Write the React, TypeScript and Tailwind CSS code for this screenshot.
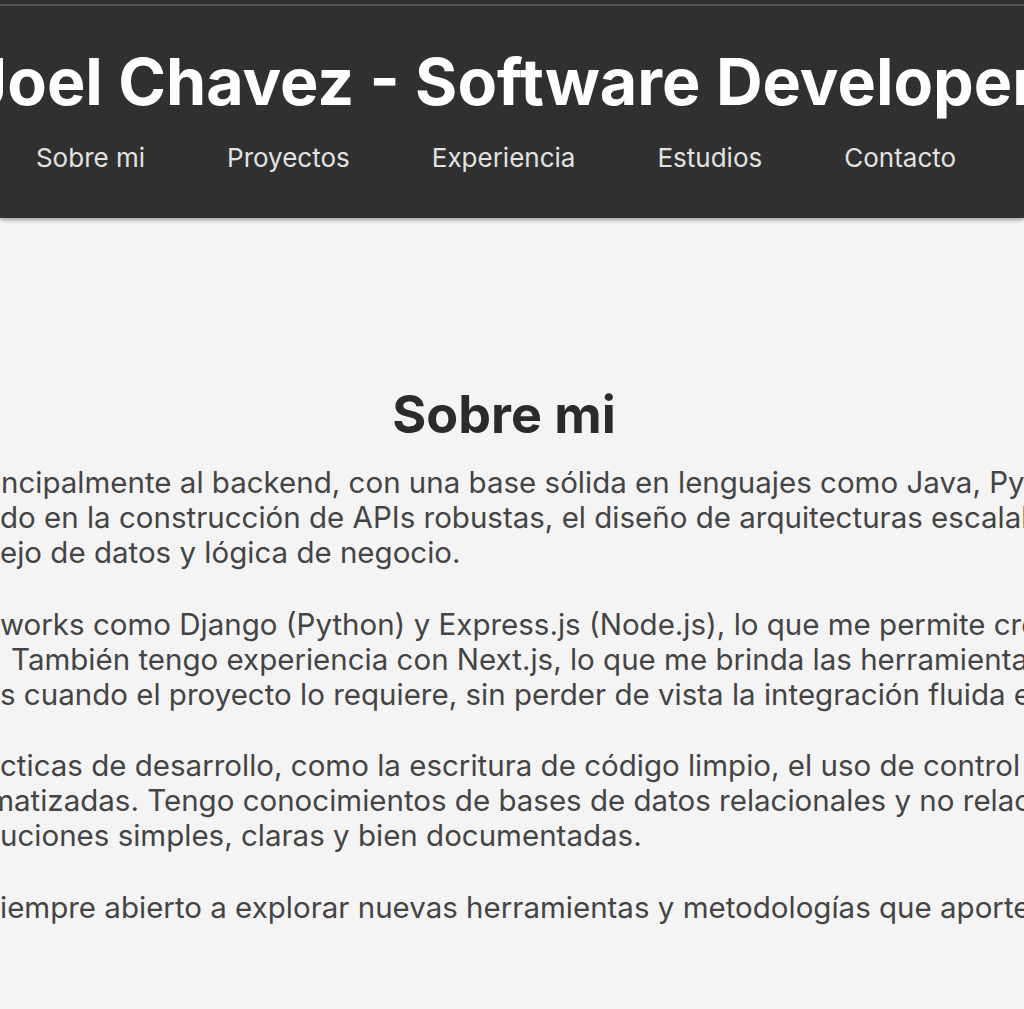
const enlaces = ["Sobre mi", "Proyectos", "Experiencia", "Estudios", "Contacto"];

// cada linea: [texto que queda a la izquierda (fuera de vista), texto visible, sangria]
const parrafos: [string, string, string][][] = [
  [
    ["Soy desarrollador de software orientado pri", "ncipalmente al backend, con una base sólida en lenguajes como Java, Python y JavaScript.", "pl-[1px]"],
    ["Me he enfoca", "do en la construcción de APIs robustas, el diseño de arquitecturas escalables y el", "pl-0"],
    ["man", "ejo de datos y lógica de negocio.", "pl-0"],
  ],
  [
    ["He trabajado con frame", "works como Django (Python) y Express.js (Node.js), lo que me permite crear servicios", "pl-0"],
    ["servicios eficientes.\u00a0\u00a0\u00a0", "También tengo experiencia con Next.js, lo que me brinda las herramientas para", "pl-[11px]"],
    ["construir interfaces modernas y funcionale", "s cuando el proyecto lo requiere, sin perder de vista la integración fluida entre", "pl-0"],
  ],
  [
    ["Me esfuerzo por aplicar buenas prá", "cticas de desarrollo, como la escritura de código limpio, el uso de control de versiones", "pl-0"],
    ["con Git y pruebas autom", "atizadas. Tengo conocimientos de bases de datos relacionales y no relacionales", "pl-[14px]"],
    ["y me gusta diseñar sol", "uciones simples, claras y bien documentadas.", "pl-0"],
  ],
  [
    ["Soy una persona curiosa y s", "iempre abierto a explorar nuevas herramientas y metodologías que aporten valor.", "pl-0"],
  ],
];

export default function App() {
  return (
    <div className="min-h-screen overflow-hidden bg-[#f4f4f4] font-['Inter',sans-serif]">
      {/* Header */}
      <header className="bg-[#303030] shadow-[0_2px_4px_rgba(0,0,0,0.35)]">
        <div className="h-[4px]" />
        <div className="h-[2px] bg-[#555555]" />
        <div className="flex justify-center pt-[37px] pr-4">
          <h1 className="whitespace-nowrap text-[64.6px] font-bold leading-[1.2] text-white">
            Joel Chavez - Software Developer
          </h1>
        </div>
        <nav className="flex justify-center pt-[19px] pb-[43px] pr-[32px]">
          <ul className="flex whitespace-nowrap">
            {enlaces.map((e) => (
              <li key={e}>
                <a href="#" className="px-[41px] text-[26px] leading-[35px] text-[#e2e2e2]">
                  {e}
                </a>
              </li>
            ))}
          </ul>
        </nav>
      </header>

      {/* Sobre mi */}
      <main className="pt-[166px] pb-20">
        <div className="flex justify-center pr-4">
          <h2 className="whitespace-nowrap text-[52px] font-bold leading-[1.2] text-[#2b2b2b]">Sobre mi</h2>
        </div>
        <div className="mt-[19px] text-[29.5px] leading-[35px] text-[#444444]">
          {parrafos.map((p, i) => (
            <p key={i} className="mb-[36.7px]">
              {p.map(([antes, texto, sangria], j) => (
                <span key={j} className={"block whitespace-nowrap " + sangria}>
                  <span className="inline-flex w-0 justify-end">{antes}</span>
                  {texto}
                </span>
              ))}
            </p>
          ))}
        </div>
      </main>
    </div>
  );
}
